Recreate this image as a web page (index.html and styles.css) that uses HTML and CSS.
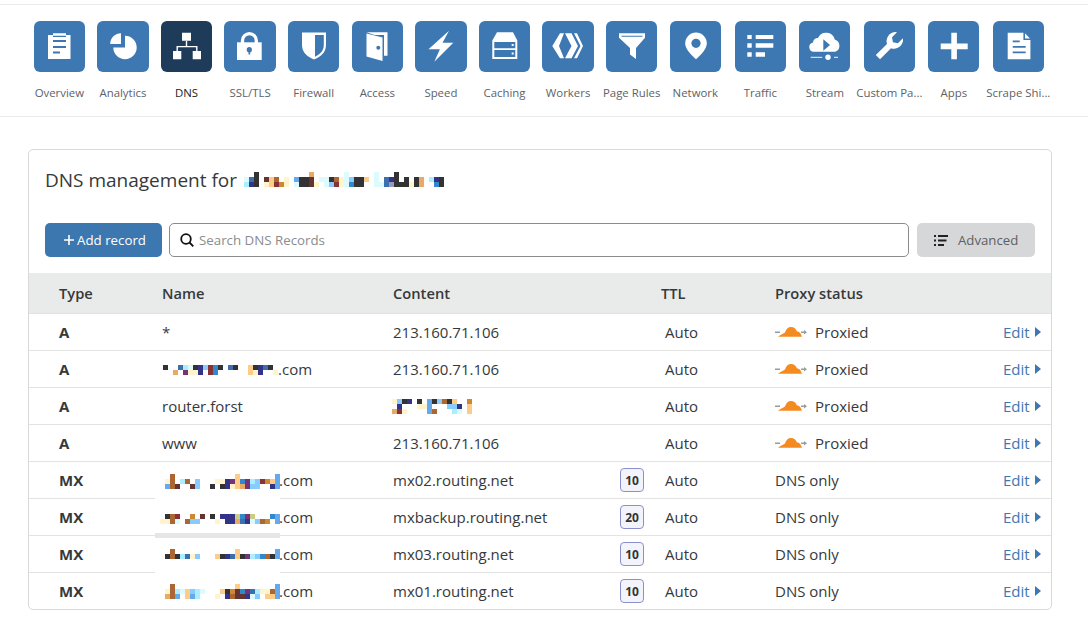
FILE: index.html
```html
<!DOCTYPE html>
<html lang="en">
<head>
<meta charset="utf-8">
<title>DNS management</title>
<link rel="stylesheet" href="styles.css">
</head>
<body>
<nav class="nav">
  <a class="tab"><span class="tile"><svg viewBox="0 0 51 51"><path class="w" d="M14 14h5v-1.800h13V14h4.500v24H14z"/><path class="bl" d="M19 14.800h13V16H19zM19 19h13v2H19zM19 25h13v2H19zM19 30.500h7v2h-7z"/></svg></span><span class="lab">Overview</span></a>
  <a class="tab"><span class="tile"><svg viewBox="0 0 51 51"><path class="w" d="M28 26.500V14.800A11.700 11.700 0 1 1 16.300 26.500zM24 23H13.200A10.800 10.800 0 0 1 24 12.200z"/></svg></span><span class="lab">Analytics</span></a>
  <a class="tab on"><span class="tile"><svg viewBox="0 0 51 51"><path class="w" d="M21 11.700h9v8h-9zM12 30h8.300v8.300H12zM31.700 30H40v8.300h-8.300zM24.800 19.500h1.400v5.400H36.500V30h-1.400v-3.700H16.900V30h-1.400v-5.100h9.300z"/></svg></span><span class="lab">DNS</span></a>
  <a class="tab"><span class="tile"><svg viewBox="0 0 51 51"><path class="w" d="M13 21.300h24.700V39H13z"/><path class="ln" d="M18.500 22v-2.500a6.900 6.900 0 0 1 13.800 0V22"/><circle class="bl" cx="25.300" cy="28.700" r="2.600"/><path class="bl" d="M24.500 29h1.700v4.500h-1.700z"/></svg></span><span class="lab">SSL/TLS</span></a>
  <a class="tab"><span class="tile"><svg viewBox="0 0 51 51"><path class="w" d="M14 11.500h24V24c0 8-6 12-12 14.500C20 36 14 32 14 24z"/><path class="bl" d="M27 14h8.800v10c0 6-4 9.500-8.800 11.700z"/></svg></span><span class="lab">Firewall</span></a>
  <a class="tab"><span class="tile"><svg viewBox="0 0 51 51"><path class="w" d="M14.500 12.500 30.500 16.500v23.500l-16-4.500z"/><path class="w" d="M14.500 11.300h21v23.500H32V14h-9.500z"/><circle class="bl" cx="26.300" cy="26.700" r="2"/></svg></span><span class="lab">Access</span></a>
  <a class="tab"><span class="tile"><svg viewBox="0 0 51 51"><path class="w" d="M34 9.700 13.500 28.300h11.400L19.300 40.700 38.300 21.700H27.500z"/></svg></span><span class="lab">Speed</span></a>
  <a class="tab"><span class="tile"><svg viewBox="0 0 51 51"><path class="w" d="M18 11.300h16l4.300 8.200v18.500h-25V19.500zM15.300 21v6.300h21V21zM15.300 29v7h21v-7z"/><path class="w" d="M32.700 23h2v2h-2zM32.700 31.600h2v2h-2z"/></svg></span><span class="lab">Caching</span></a>
  <a class="tab"><span class="tile"><svg viewBox="0 0 51 51"><path class="w" d="M18 12.300h4L17 25l5 12.300h-4L10.300 25zM23 12.300h6.500L36 25l-6.500 12.300H23L29.500 25zM32 12.300h3L41 25l-6 12.300h-3L38.500 25z"/></svg></span><span class="lab">Workers</span></a>
  <a class="tab"><span class="tile"><svg viewBox="0 0 51 51"><path class="w" d="M13 12.300h26v4.500L30 27v11l-6-4.500V27L13 16.800zM15.500 14.700v1h21v-1z"/></svg></span><span class="lab">Page Rules</span></a>
  <a class="tab"><span class="tile"><svg viewBox="0 0 51 51"><path class="w" d="M26 11.500a10.800 10.800 0 0 1 10.800 10.800c0 5-4.800 11-10.800 16-6-5-10.800-11-10.800-16A10.800 10.800 0 0 1 26 11.500z"/><circle class="bl" cx="26" cy="22.300" r="4.600"/></svg></span><span class="lab">Network</span></a>
  <a class="tab wide first"><span class="tile"><svg viewBox="0 0 51 51"><path class="w" d="M12.300 14h4.400v4h-4.400zM20.700 14h17.600v4H20.700zM12.300 22.300h4.400v4.400h-4.400zM20.700 22.300h17.600v4.400H20.700zM12.300 31.300h4.400v4.400h-4.400zM20.700 31.300H30v4.400h-9.300z"/></svg></span><span class="lab">Traffic</span></a>
  <a class="tab wide"><span class="tile"><svg viewBox="0 0 51 51"><path class="w" d="M15 30.700a4.700 4.700 0 0 1-1-9.300 5 5 0 0 1 5-4.500 9 9 0 0 1 16.800 1.500 6.500 6.500 0 0 1 .4 12.300z"/><path class="bl" d="M24.300 18.300 31 24l-6.700 5.700z"/><path class="w" d="M11.700 35.700h11.500v1.200H11.700zM35 35.700h4v1.200h-4z" opacity=".75"/><circle class="w" cx="29" cy="36.300" r="2.700"/></svg></span><span class="lab">Stream</span></a>
  <a class="tab wide"><span class="tile"><svg viewBox="0 0 51 51"><path class="w" d="M28 11.800a9 9 0 0 1 5-.6l-5 5 .9 5.100 5 .9 5-5a9 9 0 0 1-11.900 10L16 38.300 11.800 34 23 22.900a9 9 0 0 1 5-11.100z"/></svg></span><span class="lab">Custom Pa...</span></a>
  <a class="tab wide"><span class="tile"><svg viewBox="0 0 51 51"><path class="w" d="M23.300 11.700h5.600v10.800h10.800v5.700H28.900v10.100h-5.600V28.200H12.700v-5.700h10.600z"/></svg></span><span class="lab">Apps</span></a>
  <a class="tab wide"><span class="tile"><svg viewBox="0 0 51 51"><path class="w" d="M14.700 11.700h15.700V19h7v19.300H14.700zM32 12.200l5 5.200h-5z"/><path class="bl" d="M19.700 19.500h7v1.800h-7zM19.700 25h13v1.800h-13zM19.700 30.500h13v1.800h-13z"/></svg></span><span class="lab">Scrape Shi...</span></a>
</nav>

<main class="page">
  <section class="card">
    <h1 class="title">DNS management for
      <svg class="mos title-mos" width="200" height="15" viewBox="0 0 200 15">
        <rect x="10" y="0" class="k"/><rect x="65" y="0" class="t"/><rect x="100" y="0" class="i"/><rect x="130" y="0" class="i"/><rect x="150" y="0" class="k"/>
        <rect x="0" y="5" class="i"/><rect x="5" y="5" class="b"/><rect x="10" y="5" class="k"/><rect x="20" y="5" class="d"/><rect x="25" y="5" class="o"/><rect x="30" y="5" class="u"/><rect x="40" y="5" class="y"/><rect x="50" y="5" class="m"/><rect x="55" y="5" class="k"/><rect x="60" y="5" class="k"/><rect x="65" y="5" class="d"/><rect x="75" y="5" class="i"/><rect x="80" y="5" class="i"/><rect x="85" y="5" class="k"/><rect x="90" y="5" class="u"/><rect x="95" y="5" class="y"/><rect x="100" y="5" class="i"/><rect x="105" y="5" class="l"/><rect x="110" y="5" class="k"/><rect x="115" y="5" class="k"/><rect x="120" y="5" class="o"/><rect x="130" y="5" class="i"/><rect x="140" y="5" class="b"/><rect x="145" y="5" class="n"/><rect x="150" y="5" class="k"/><rect x="160" y="5" class="k"/><rect x="170" y="5" class="k"/><rect x="175" y="5" class="t"/><rect x="185" y="5" class="c"/><rect x="190" y="5" class="n"/><rect x="195" y="5" class="k"/>
        <rect x="0" y="10" class="c"/><rect x="5" y="10" class="n"/><rect x="10" y="10" class="k"/><rect x="20" y="10" class="y"/><rect x="25" y="10" class="o"/><rect x="30" y="10" class="r"/><rect x="35" y="10" class="g"/><rect x="40" y="10" class="y"/><rect x="50" y="10" class="i"/><rect x="55" y="10" class="k"/><rect x="60" y="10" class="k"/><rect x="65" y="10" class="d"/><rect x="70" y="10" class="y"/><rect x="80" y="10" class="i"/><rect x="85" y="10" class="l"/><rect x="90" y="10" class="r"/><rect x="95" y="10" class="y"/><rect x="100" y="10" class="i"/><rect x="105" y="10" class="s"/><rect x="110" y="10" class="k"/><rect x="115" y="10" class="k"/><rect x="130" y="10" class="i"/><rect x="135" y="10" class="i"/><rect x="140" y="10" class="b"/><rect x="145" y="10" class="v"/><rect x="150" y="10" class="k"/><rect x="155" y="10" class="k"/><rect x="160" y="10" class="k"/><rect x="165" y="10" class="y"/><rect x="170" y="10" class="k"/><rect x="175" y="10" class="t"/><rect x="190" y="10" class="s"/><rect x="195" y="10" class="k"/>
      </svg>
    </h1>
    <div class="tools">
      <button class="add"><svg class="plus" viewBox="0 0 10 10"><path d="M4.200 0h1.600v4.200H10v1.600H5.800V10H4.200V5.800H0V4.200h4.200z"/></svg>Add record</button>
      <label class="search"><svg class="glass" viewBox="0 0 14 14"><circle cx="6" cy="6" r="4.800"/><path d="M9.500 9.500 13.300 13.300"/></svg><span class="ph">Search DNS Records</span></label>
      <button class="adv"><svg class="filter" viewBox="0 0 14 11"><path d="M0 0h2v2H0zM4 0h10v2H4zM0 4.500h2v2H0zM4 4.500h8.500v2H4zM0 9h2v2H0zM4 9h6v2H4z"/></svg>Advanced</button>
    </div>
    <div class="table">
      <div class="row head"><span class="ty">Type</span><span>Name</span><span>Content</span><span class="ttlh">TTL</span><span>Proxy status</span></div>

      <div class="row"><span class="ty">A</span><span>*</span><span class="ct">213.160.71.106</span><span class="ttl">Auto</span><span class="px"><svg class="cloud" viewBox="0 0 32 12"><use href="#cl"/></svg>Proxied</span><a class="edit">Edit<i class="tri"></i></a></div>

      <div class="row"><span class="ty">A</span><span class="nm"><svg class="mos nm-mos" width="116" height="20" viewBox="0 0 116 20">
        <rect x="1" y="6" class="k"/><rect x="16" y="6" class="b"/><rect x="21" y="6" class="c"/><rect x="26" y="6" class="i"/><rect x="31" y="6" class="k"/><rect x="36" y="6" class="n"/><rect x="41" y="6" class="l"/><rect x="46" y="6" class="r"/><rect x="51" y="6" class="s"/><rect x="56" y="6" class="k"/><rect x="66" y="6" class="b"/><rect x="71" y="6" class="k"/><rect x="86" y="6" class="o"/><rect x="91" y="6" class="k"/><rect x="96" y="6" class="n"/><rect x="101" y="6" class="b"/><rect x="106" y="6" class="k"/>
        <rect x="11" y="11" class="t"/><rect x="21" y="11" class="p"/><rect x="26" y="11" class="y"/><rect x="31" y="11" class="y"/><rect x="36" y="11" class="n"/><rect x="46" y="11" class="r"/><rect x="51" y="11" class="s"/><rect x="86" y="11" class="o"/><rect x="91" y="11" class="y"/><rect x="96" y="11" class="n"/><rect x="111" y="11" class="y"/>
      </svg>.com</span><span class="ct">213.160.71.106</span><span class="ttl">Auto</span><span class="px"><svg class="cloud" viewBox="0 0 32 12"><use href="#cl"/></svg>Proxied</span><a class="edit">Edit<i class="tri"></i></a></div>

      <div class="row"><span class="ty">A</span><span>router.forst</span><span class="ct"><svg class="mos" width="80" height="20" viewBox="0 0 80 20">
        <rect x="-1" y="3" class="y"/><rect x="4" y="3" class="l"/><rect x="9" y="3" class="k"/><rect x="14" y="3" class="n"/><rect x="24" y="3" class="k"/><rect x="34" y="3" class="m"/><rect x="39" y="3" class="k"/><rect x="44" y="3" class="l"/><rect x="49" y="3" class="u"/><rect x="54" y="3" class="k"/><rect x="59" y="3" class="o"/><rect x="74" y="3" class="g"/>
        <rect x="4" y="8" class="n"/><rect x="24" y="8" class="y"/><rect x="29" y="8" class="y"/><rect x="34" y="8" class="m"/><rect x="54" y="8" class="l"/><rect x="59" y="8" class="l"/><rect x="64" y="8" class="n"/><rect x="74" y="8" class="o"/>
        <rect x="-1" y="13" class="t"/><rect x="4" y="13" class="r"/><rect x="9" y="13" class="y"/><rect x="34" y="13" class="m"/><rect x="39" y="13" class="u"/><rect x="59" y="13" class="c"/><rect x="64" y="13" class="i"/><rect x="74" y="13" class="o"/>
      </svg></span><span class="ttl">Auto</span><span class="px"><svg class="cloud" viewBox="0 0 32 12"><use href="#cl"/></svg>Proxied</span><a class="edit">Edit<i class="tri"></i></a></div>

      <div class="row"><span class="ty">A</span><span>www</span><span class="ct">213.160.71.106</span><span class="ttl">Auto</span><span class="px"><svg class="cloud" viewBox="0 0 32 12"><use href="#cl"/></svg>Proxied</span><a class="edit">Edit<i class="tri"></i></a></div>

      <div class="row"><span class="ty">MX</span><span class="nm"><svg class="mos mx-mos" width="117" height="20" viewBox="0 0 117 20">
        <rect x="8" y="4" class="u"/><rect x="73" y="4" class="o"/><rect x="113" y="4" class="m"/>
        <rect x="3" y="9" class="y"/><rect x="8" y="9" class="u"/><rect x="18" y="9" class="c"/><rect x="23" y="9" class="u"/><rect x="33" y="9" class="l"/><rect x="53" y="9" class="y"/><rect x="58" y="9" class="y"/><rect x="63" y="9" class="n"/><rect x="68" y="9" class="p"/><rect x="73" y="9" class="o"/><rect x="78" y="9" class="s"/><rect x="83" y="9" class="p"/><rect x="88" y="9" class="c"/><rect x="93" y="9" class="l"/><rect x="98" y="9" class="r"/><rect x="103" y="9" class="g"/><rect x="108" y="9" class="o"/><rect x="113" y="9" class="m"/>
        <rect x="3" y="14" class="m"/><rect x="8" y="14" class="u"/><rect x="13" y="14" class="d"/><rect x="28" y="14" class="d"/><rect x="33" y="14" class="l"/><rect x="48" y="14" class="k"/><rect x="58" y="14" class="k"/><rect x="63" y="14" class="n"/><rect x="68" y="14" class="y"/><rect x="73" y="14" class="o"/><rect x="78" y="14" class="t"/><rect x="83" y="14" class="p"/><rect x="88" y="14" class="l"/><rect x="93" y="14" class="l"/><rect x="108" y="14" class="n"/><rect x="113" y="14" class="m"/>
      </svg>.com</span><span class="ct">mx02.routing.net<b class="prio">10</b></span><span class="ttl">Auto</span><span>DNS only</span><a class="edit">Edit<i class="tri"></i></a><i class="patch"></i></div>

      <div class="row"><span class="ty">MX</span><span class="nm"><svg class="mos mx-mos" width="117" height="20" viewBox="0 0 117 20">
        <rect x="3" y="7" class="k"/><rect x="8" y="7" class="u"/><rect x="13" y="7" class="r"/><rect x="28" y="7" class="g"/><rect x="38" y="7" class="d"/><rect x="48" y="7" class="k"/><rect x="58" y="7" class="n"/><rect x="63" y="7" class="n"/><rect x="68" y="7" class="n"/><rect x="73" y="7" class="e"/><rect x="78" y="7" class="s"/><rect x="83" y="7" class="p"/><rect x="88" y="7" class="e"/><rect x="108" y="7" class="s"/><rect x="113" y="7" class="m"/>
        <rect x="-2" y="12" class="y"/><rect x="3" y="12" class="y"/><rect x="8" y="12" class="u"/><rect x="13" y="12" class="i"/><rect x="23" y="12" class="u"/><rect x="28" y="12" class="l"/><rect x="33" y="12" class="l"/><rect x="53" y="12" class="y"/><rect x="63" y="12" class="n"/><rect x="68" y="12" class="n"/><rect x="73" y="12" class="t"/><rect x="78" y="12" class="b"/><rect x="83" y="12" class="n"/><rect x="88" y="12" class="i"/><rect x="93" y="12" class="l"/><rect x="98" y="12" class="u"/><rect x="103" y="12" class="g"/><rect x="113" y="12" class="m"/>
      </svg>.com</span><span class="ct">mxbackup.routing.net<b class="prio">20</b></span><span class="ttl">Auto</span><span>DNS only</span><a class="edit">Edit<i class="tri"></i></a><i class="patch band"></i></div>

      <div class="row"><span class="ty">MX</span><span class="nm"><svg class="mos mx-mos" width="117" height="20" viewBox="0 0 117 20">
        <rect x="8" y="5" class="u"/><rect x="73" y="5" class="o"/><rect x="113" y="5" class="m"/>
        <rect x="3" y="10" class="k"/><rect x="8" y="10" class="u"/><rect x="13" y="10" class="k"/><rect x="18" y="10" class="c"/><rect x="23" y="10" class="b"/><rect x="28" y="10" class="y"/><rect x="33" y="10" class="l"/><rect x="53" y="10" class="o"/><rect x="58" y="10" class="k"/><rect x="63" y="10" class="n"/><rect x="68" y="10" class="b"/><rect x="73" y="10" class="o"/><rect x="78" y="10" class="k"/><rect x="83" y="10" class="p"/><rect x="88" y="10" class="c"/><rect x="93" y="10" class="l"/><rect x="98" y="10" class="s"/><rect x="103" y="10" class="u"/><rect x="108" y="10" class="k"/><rect x="113" y="10" class="m"/>
      </svg>.com</span><span class="ct">mx03.routing.net<b class="prio">10</b></span><span class="ttl">Auto</span><span>DNS only</span><a class="edit">Edit<i class="tri"></i></a><i class="patch"></i></div>

      <div class="row"><span class="ty">MX</span><span class="nm"><svg class="mos mx-mos" width="117" height="20" viewBox="0 0 117 20">
        <rect x="8" y="3" class="u"/><rect x="73" y="3" class="o"/><rect x="113" y="3" class="m"/>
        <rect x="3" y="8" class="y"/><rect x="8" y="8" class="u"/><rect x="13" y="8" class="c"/><rect x="18" y="8" class="i"/><rect x="23" y="8" class="o"/><rect x="28" y="8" class="l"/><rect x="33" y="8" class="c"/><rect x="38" y="8" class="i"/><rect x="58" y="8" class="o"/><rect x="63" y="8" class="k"/><rect x="68" y="8" class="g"/><rect x="73" y="8" class="d"/><rect x="78" y="8" class="s"/><rect x="83" y="8" class="p"/><rect x="88" y="8" class="b"/><rect x="93" y="8" class="c"/><rect x="98" y="8" class="y"/><rect x="103" y="8" class="y"/><rect x="108" y="8" class="u"/><rect x="113" y="8" class="m"/>
        <rect x="3" y="13" class="t"/><rect x="8" y="13" class="u"/><rect x="13" y="13" class="m"/><rect x="23" y="13" class="o"/><rect x="28" y="13" class="m"/><rect x="33" y="13" class="c"/><rect x="53" y="13" class="y"/><rect x="63" y="13" class="n"/><rect x="68" y="13" class="u"/><rect x="73" y="13" class="d"/><rect x="78" y="13" class="d"/><rect x="83" y="13" class="n"/><rect x="88" y="13" class="i"/><rect x="93" y="13" class="l"/><rect x="103" y="13" class="o"/><rect x="108" y="13" class="o"/><rect x="113" y="13" class="m"/>
      </svg>.com</span><span class="ct">mx01.routing.net<b class="prio">10</b></span><span class="ttl">Auto</span><span>DNS only</span><a class="edit">Edit<i class="tri"></i></a></div>
    </div>
  </section>
</main>

<svg class="defs" width="0" height="0"><symbol id="cl" viewBox="0 0 32 12"><path class="cl-g" d="M0 5.500h5v1.400H0zM26 5.500h3V4l3 2.200-3 2.200V6.900h-3z"/><path class="cl-o" d="M3 10.800C5 9 8 8 10 6.500 11 3 13 1 16 1c3 0 5 2 6 4.500 3 0 4 2.500 5 5.300z"/></symbol></svg>
</body>
</html>
```

FILE: styles.css
```css
* { box-sizing: border-box; }
html, body { margin: 0; padding: 0; background: #fff; }
body {
  font-family: "Open Sans", "Noto Sans", sans-serif;
  font-size: 15px;
  color: #36393a;
  height: 622px;
  overflow: hidden;
  padding-top: 4px;
}

/* top navigation */
.nav {
  display: flex;
  height: 113px;
  padding: 16px 0 0 27.55px;
  border-top: 1px solid #eaeaea;
  border-bottom: 1px solid #eaeaea;
}
.tab {
  width: 63.6px;
  flex: none;
  display: flex;
  flex-direction: column;
  align-items: center;
  gap: 13px;
}
.tab.wide { width: 64.5px; }
.tab.first { margin-left: 1px; }
.tile {
  width: 51.3px;
  height: 51px;
  background: #3e78b2;
  border-radius: 6px;
  display: block;
  flex: none;
}
.tile svg { display: block; width: 51px; height: 51px; }
.on .tile { background: #1e3b59; }
.lab {
  font-size: 11.4px;
  line-height: 16px;
  color: #5d6266;
  text-align: center;
  white-space: nowrap;
}
.on .lab { color: #222; }
.w { fill: #fff; fill-rule: evenodd; }
.bl { fill: #3e78b2; }
.on .bl { fill: #1e3b59; }
.ln { fill: none; stroke: #fff; stroke-width: 3.3; }

/* card */
.page { padding: 32px 36px 0 28px; }
.card {
  border: 1px solid #d9d9d9;
  border-radius: 5px;
  height: 461px;
  overflow: hidden;
}
.title {
  margin: 0;
  height: 73px;
  padding: 15px 0 0 16px;
  font-size: 19px;
  font-weight: 400;
  line-height: 30px;
  display: flex;
  align-items: flex-start;
  gap: 7px;
}
.title-mos { margin-top: 7px; }
.tools {
  display: flex;
  gap: 7px;
  padding: 0 16px;
  height: 34px;
}
.add, .adv {
  border: 0;
  border-radius: 5px;
  height: 34px;
  font: inherit;
  display: flex;
  align-items: center;
  padding: 0;
}
.add {
  width: 117px;
  background: #3d77b0;
  color: #fff;
  font-size: 13.3px;
  padding-left: 19px;
  gap: 3px;
}
.plus { width: 10px; height: 10px; fill: #fff; }
.search {
  flex: 1;
  border: 1px solid #8b8b8b;
  border-radius: 5px;
  display: flex;
  align-items: center;
  padding-left: 10px;
  gap: 5px;
  margin-right: 1px;
}
.glass { width: 14px; height: 14px; fill: none; stroke: #111; stroke-width: 1.800; }
.ph { font-size: 13.3px; color: #8a8c8e; }
.adv {
  width: 118px;
  background: #d6d7d9;
  color: #5d6063;
  font-size: 13.2px;
  padding-left: 17px;
  gap: 10px;
}
.filter { width: 14px; height: 11px; fill: #222; }

/* table */
.table { margin-top: 16px; }
.row {
  position: relative;
  display: grid;
  grid-template-columns: 133px 231px 268px 114px 1fr 48px;
  align-items: center;
  height: 37px;
  border-bottom: 1px solid #e3e3e3;
}
.head {
  height: 41px;
  background: #e9ebeb;
  font-weight: 600;
  font-size: 14.7px;
}
.ty { padding-left: 30px; font-weight: 700; font-size: 15px; }
.head .ty { font-weight: 600; font-size: 14.7px; }
.nm { display: flex; align-items: center; }
.ct { display: flex; align-items: center; justify-content: space-between; padding-right: 17px; }
.ttl { padding-left: 4px; }
.px { display: flex; align-items: center; gap: 8px; }
.cloud { width: 32px; height: 12px; flex: none; }
.cl-g { fill: #9a9a9a; }
.cl-o { fill: #f38b20; }
.defs { position: absolute; }
.edit {
  color: #3f78b1;
  display: flex;
  align-items: center;
  gap: 5px;
}
.tri {
  width: 0;
  height: 0;
  border-left: 6px solid #3f78b1;
  border-top: 5.5px solid transparent;
  border-bottom: 5.5px solid transparent;
}
.prio {
  width: 24px;
  height: 24px;
  border: 1px solid #8b90cc;
  border-radius: 4px;
  background: #f3f4fb;
  font-size: 12px;
  font-weight: 700;
  color: #333;
  display: flex;
  align-items: center;
  justify-content: center;
}
.patch {
  position: absolute;
  left: 126px;
  width: 125px;
  bottom: -1px;
  height: 1px;
  background: #fff;
}
.band {
  background: #e6e6e6;
  height: 5px;
  bottom: -3px;
}

/* pixelated blocks */
.mos { overflow: visible; flex: none; shape-rendering: crispEdges; }
.mos rect { width: 5px; height: 5px; }
.k { fill: #333; }
.n { fill: #333388; }
.b { fill: #3a70b0; }
.s { fill: #3388cc; }
.l { fill: #88ccff; }
.m { fill: #66aaee; }
.c { fill: #aaeeff; }
.i { fill: #dcfbff; }
.y { fill: #fff4cc; }
.o { fill: #ffcc88; }
.t { fill: #e8aa66; }
.u { fill: #aa6633; }
.g { fill: #cc8833; }
.r { fill: #883333; }
.d { fill: #663333; }
.p { fill: #773377; }
.v { fill: #9999bb; }
.e { fill: #cccc88; }
```
